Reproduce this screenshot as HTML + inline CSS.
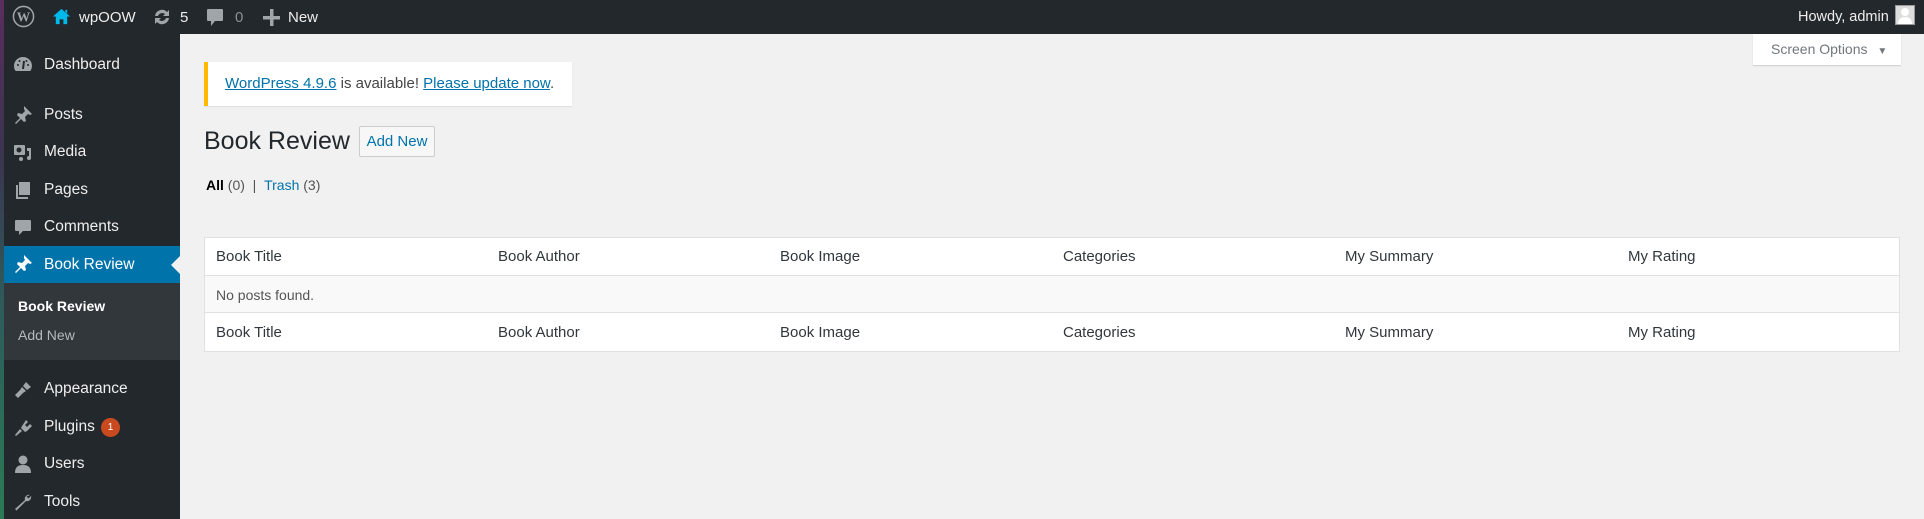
<!DOCTYPE html>
<html><head><meta charset="utf-8"><style>
*{margin:0;padding:0;box-sizing:border-box}
body{width:1924px;height:519px;overflow:hidden;background:#f1f1f1;font-family:"Liberation Sans",sans-serif;position:relative;color:#23282d}
.abs{position:absolute}
#bar{left:0;top:0;width:1924px;height:34px;background:#23282d}
#side{left:0;top:34px;width:180px;height:485px;background:#23282d}
#stripe{left:0;top:0;width:4px;height:519px;background:linear-gradient(#5a2d5e,#3b3550 30%,#2d5d5a 60%,#2b7a55)}
.bt{color:#eee;font-size:15px;top:9px}
.mi{color:#eee;font-size:15.5px;left:44px}
.ic{left:13px;width:20px;height:20px}
.th{font-size:15px;color:#32373c}
a{color:#0073aa}
</style></head><body>
<div id="bar" class="abs"></div>
<div id="side" class="abs"></div>
<div id="stripe" class="abs"></div>
<svg class="abs" style="left:12px;top:5px" width="23" height="23" viewBox="0 0 24 24"><circle cx="12" cy="12" r="10.5" fill="none" stroke="#a0a5aa" stroke-width="1.6"/><text x="12" y="17" font-size="14" font-family="Liberation Serif" font-weight="bold" text-anchor="middle" fill="#a0a5aa">W</text></svg>
<svg class="abs" style="left:52px;top:7px" width="19" height="19" viewBox="0 0 20 20"><path d="M10 2L1 10h3v8h4v-5h4v5h4v-8h3z M14 3h2v4l-2-2z" fill="#00b9eb"/></svg>
<div class="abs bt" style="left:79px">wpOOW</div>
<svg class="abs" style="left:152px;top:8px" width="20" height="18" viewBox="0 0 20 18"><path d="M3 8a7 7 0 0 1 12-4l2-2v6h-6l2-2a4.5 4.5 0 0 0-7 2z M17 10a7 7 0 0 1-12 4l-2 2v-6h6l-2 2a4.5 4.5 0 0 0 7-2z" fill="#a0a5aa"/></svg>
<div class="abs bt" style="left:180px">5</div>
<svg class="abs" style="left:206px;top:8px" width="18" height="20" viewBox="0 0 18 20"><path d="M2 1h14a1 1 0 0 1 1 1v10a1 1 0 0 1-1 1h-7l-4 5v-5h-3a1 1 0 0 1-1-1v-10a1 1 0 0 1 1-1z" fill="#a0a5aa"/></svg>
<div class="abs bt" style="left:235px;color:#8c8f94">0</div>
<svg class="abs" style="left:263px;top:9px" width="17" height="17"><rect x="7" y="0" width="3.5" height="17" fill="#a0a5aa"/><rect x="0" y="7" width="17" height="3.5" fill="#a0a5aa"/></svg>
<div class="abs bt" style="left:288px">New</div>
<div class="abs bt" style="left:1798px;font-size:14.5px">Howdy, admin</div>
<div class="abs" style="left:1895px;top:5px;width:20px;height:20px;background:#ddd;border:1px solid #999;overflow:hidden"><svg width="18" height="18" viewBox="0 0 18 18"><circle cx="9" cy="6" r="4" fill="#fff"/><path d="M2 18c0-5 3-7 7-7s7 2 7 7z" fill="#fff"/></svg></div>
<svg class="abs ic" style="top:55px" viewBox="0 0 20 20"><path d="M10 2a9 9 0 0 0-9 9c0 2 .6 3.5 1.6 5h14.8a9 9 0 0 0 1.6-5 9 9 0 0 0-9-9z" fill="#a0a5aa"/><path d="M10 14l1-8" stroke="#23282d" stroke-width="2"/><circle cx="5" cy="10" r="1" fill="#23282d"/><circle cx="15" cy="10" r="1" fill="#23282d"/><circle cx="6.5" cy="6" r="1" fill="#23282d"/><circle cx="13.5" cy="6" r="1" fill="#23282d"/></svg>
<div class="abs mi" style="top:56px">Dashboard</div>
<svg class="abs ic" style="top:105px" viewBox="0 0 20 20"><path d="M11 1l8 8-2 1-2-1-3 3 1 4-2 1-3-3-5 5-1-1 5-5-3-3 1-2 4 1 3-3-1-2z" fill="#a0a5aa"/></svg>
<div class="abs mi" style="top:106px">Posts</div>
<svg class="abs ic" style="top:142px" viewBox="0 0 20 20"><rect x="1" y="3" width="11" height="10" rx="1" fill="#a0a5aa"/><circle cx="6" cy="8" r="2.5" fill="#23282d"/><path d="M14 6h4v10a2 2 0 1 1-2-2V9h-2z" fill="#a0a5aa"/><circle cx="8" cy="17" r="2" fill="#a0a5aa"/></svg>
<div class="abs mi" style="top:143px">Media</div>
<svg class="abs ic" style="top:180px" viewBox="0 0 20 20"><path d="M6 2h11v13H6z M3 5h2v12h10v2H3z" fill="#a0a5aa"/></svg>
<div class="abs mi" style="top:181px">Pages</div>
<svg class="abs ic" style="top:217px" viewBox="0 0 20 20"><path d="M3 3h14a1 1 0 0 1 1 1v9a1 1 0 0 1-1 1h-7l-4 4v-4h-3a1 1 0 0 1-1-1v-9a1 1 0 0 1 1-1z" fill="#a0a5aa"/></svg>
<div class="abs mi" style="top:218px">Comments</div>
<div class="abs" style="left:4px;top:246px;width:176px;height:37px;background:#0073aa"></div>
<div class="abs" style="left:171px;top:256px;width:0;height:0;border-top:9px solid transparent;border-bottom:9px solid transparent;border-right:9px solid #f1f1f1"></div>
<svg class="abs ic" style="top:254px" viewBox="0 0 20 20"><path d="M11 1l8 8-2 1-2-1-3 3 1 4-2 1-3-3-5 5-1-1 5-5-3-3 1-2 4 1 3-3-1-2z" fill="#fff"/></svg>
<div class="abs mi" style="top:256px;color:#fff">Book Review</div>
<div class="abs" style="left:4px;top:283px;width:176px;height:77px;background:#32373c"></div>
<div class="abs" style="left:18px;top:298px;color:#fff;font-size:14px;font-weight:bold">Book Review</div>
<div class="abs" style="left:18px;top:327px;color:#b4b9be;font-size:14px">Add New</div>
<svg class="abs ic" style="top:380px" viewBox="0 0 20 20"><path d="M13 2l5 5-4 3-4-4z M9 7l4 4-3 2-5 5-3-3 5-5z" fill="#a0a5aa"/></svg>
<div class="abs mi" style="top:380px">Appearance</div>
<svg class="abs ic" style="top:417px" viewBox="0 0 20 20"><path d="M13 3l2 2-3 3 2 2 3-3 2 2-3 3-2 2-2 1-4-4 1-2z M7 12l2 2-6 5-1-1z" fill="#a0a5aa"/></svg>
<div class="abs mi" style="top:418px">Plugins</div>
<div class="abs" style="left:101px;top:418px;width:19px;height:19px;border-radius:50%;background:#ca4a1f;color:#fff;font-size:10px;text-align:center;line-height:19px">1</div>
<svg class="abs ic" style="top:454px" viewBox="0 0 20 20"><circle cx="10" cy="6" r="4.5" fill="#a0a5aa"/><path d="M2 19c0-6 3-8 8-8s8 2 8 8z" fill="#a0a5aa"/></svg>
<div class="abs mi" style="top:455px">Users</div>
<svg class="abs ic" style="top:492px" viewBox="0 0 20 20"><path d="M17 3a4 4 0 0 0-5 5L2 17l1.5 1.5L13 9a4 4 0 0 0 5-5l-2.5 2.5-2-2z" fill="#a0a5aa"/></svg>
<div class="abs mi" style="top:493px">Tools</div>
<div class="abs" style="left:1753px;top:34px;width:148px;height:31px;background:#fff;box-shadow:0 1px 1px rgba(0,0,0,.15);color:#72777c;font-size:14px;line-height:31px;padding-left:18px">Screen Options <span style="font-size:10px;margin-left:6px">▼</span></div>
<div class="abs" style="left:204px;top:62px;width:368px;height:44px;background:#fff;border-left:4px solid #ffb900;box-shadow:0 1px 1px rgba(0,0,0,.08);font-size:15px;line-height:44px;padding-left:17px;color:#444"><a style="text-decoration:underline">WordPress 4.9.6</a> is available! <a style="text-decoration:underline">Please update now</a>.</div>
<div class="abs" style="left:204px;top:127px;font-size:25px;color:#23282d">Book Review</div>
<div class="abs" style="left:359px;top:126px;width:76px;height:31px;border:1px solid #ccc;background:#f7f7f7;border-radius:2px;color:#0073aa;font-size:15px;text-align:center;line-height:29px">Add New</div>
<div class="abs" style="left:206px;top:177px;font-size:14px;color:#555"><b style="color:#000">All</b> (0) &nbsp;| &nbsp;<a>Trash</a> (3)</div>
<div class="abs" style="left:204px;top:237px;width:1696px;height:115px;background:#fff;border:1px solid #e1e1e1"></div>
<div class="abs" style="left:205px;top:275px;width:1694px;height:38px;background:#f9f9f9;border-top:1px solid #e1e1e1;border-bottom:1px solid #e1e1e1"></div>
<div class="abs th" style="left:216px;top:248px">Book Title</div>
<div class="abs th" style="left:498px;top:248px">Book Author</div>
<div class="abs th" style="left:780px;top:248px">Book Image</div>
<div class="abs th" style="left:1063px;top:248px">Categories</div>
<div class="abs th" style="left:1345px;top:248px">My Summary</div>
<div class="abs th" style="left:1628px;top:248px">My Rating</div>
<div class="abs" style="left:216px;top:287px;font-size:14px;color:#555">No posts found.</div>
<div class="abs th" style="left:216px;top:324px">Book Title</div>
<div class="abs th" style="left:498px;top:324px">Book Author</div>
<div class="abs th" style="left:780px;top:324px">Book Image</div>
<div class="abs th" style="left:1063px;top:324px">Categories</div>
<div class="abs th" style="left:1345px;top:324px">My Summary</div>
<div class="abs th" style="left:1628px;top:324px">My Rating</div>
</body></html>
